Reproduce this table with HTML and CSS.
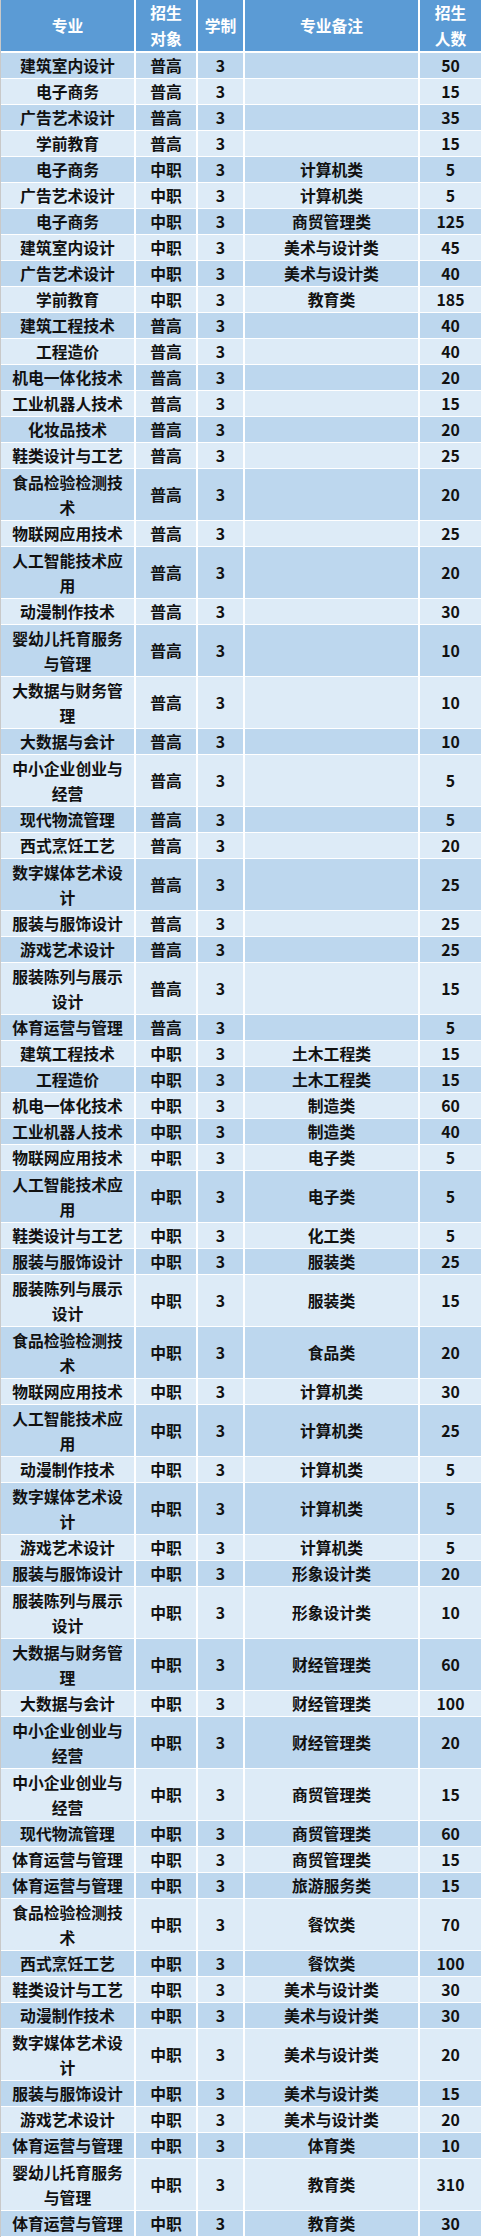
FILE: index.html
```html
<!DOCTYPE html>
<html lang="zh">
<head>
<meta charset="utf-8">
<title>招生计划</title>
<link rel="stylesheet" href="styles.css">
</head>
<body>
<table class="plan">
<colgroup>
<col class="c1"><col class="c2"><col class="c3"><col class="c4"><col class="c5">
</colgroup>
<thead>
<tr><th>专业</th><th>招生<br>对象</th><th>学制</th><th>专业备注</th><th>招生<br>人数</th></tr>
</thead>
<tbody>
<tr><td>建筑室内设计</td><td>普高</td><td>3</td><td></td><td>50</td></tr>
<tr><td>电子商务</td><td>普高</td><td>3</td><td></td><td>15</td></tr>
<tr><td>广告艺术设计</td><td>普高</td><td>3</td><td></td><td>35</td></tr>
<tr><td>学前教育</td><td>普高</td><td>3</td><td></td><td>15</td></tr>
<tr><td>电子商务</td><td>中职</td><td>3</td><td>计算机类</td><td>5</td></tr>
<tr><td>广告艺术设计</td><td>中职</td><td>3</td><td>计算机类</td><td>5</td></tr>
<tr><td>电子商务</td><td>中职</td><td>3</td><td>商贸管理类</td><td>125</td></tr>
<tr><td>建筑室内设计</td><td>中职</td><td>3</td><td>美术与设计类</td><td>45</td></tr>
<tr><td>广告艺术设计</td><td>中职</td><td>3</td><td>美术与设计类</td><td>40</td></tr>
<tr><td>学前教育</td><td>中职</td><td>3</td><td>教育类</td><td>185</td></tr>
<tr><td>建筑工程技术</td><td>普高</td><td>3</td><td></td><td>40</td></tr>
<tr><td>工程造价</td><td>普高</td><td>3</td><td></td><td>40</td></tr>
<tr><td>机电一体化技术</td><td>普高</td><td>3</td><td></td><td>20</td></tr>
<tr><td>工业机器人技术</td><td>普高</td><td>3</td><td></td><td>15</td></tr>
<tr><td>化妆品技术</td><td>普高</td><td>3</td><td></td><td>20</td></tr>
<tr><td>鞋类设计与工艺</td><td>普高</td><td>3</td><td></td><td>25</td></tr>
<tr class="dbl"><td>食品检验检测技术</td><td>普高</td><td>3</td><td></td><td>20</td></tr>
<tr><td>物联网应用技术</td><td>普高</td><td>3</td><td></td><td>25</td></tr>
<tr class="dbl"><td>人工智能技术应用</td><td>普高</td><td>3</td><td></td><td>20</td></tr>
<tr><td>动漫制作技术</td><td>普高</td><td>3</td><td></td><td>30</td></tr>
<tr class="dbl"><td>婴幼儿托育服务与管理</td><td>普高</td><td>3</td><td></td><td>10</td></tr>
<tr class="dbl"><td>大数据与财务管理</td><td>普高</td><td>3</td><td></td><td>10</td></tr>
<tr><td>大数据与会计</td><td>普高</td><td>3</td><td></td><td>10</td></tr>
<tr class="dbl"><td>中小企业创业与经营</td><td>普高</td><td>3</td><td></td><td>5</td></tr>
<tr><td>现代物流管理</td><td>普高</td><td>3</td><td></td><td>5</td></tr>
<tr><td>西式烹饪工艺</td><td>普高</td><td>3</td><td></td><td>20</td></tr>
<tr class="dbl"><td>数字媒体艺术设计</td><td>普高</td><td>3</td><td></td><td>25</td></tr>
<tr><td>服装与服饰设计</td><td>普高</td><td>3</td><td></td><td>25</td></tr>
<tr><td>游戏艺术设计</td><td>普高</td><td>3</td><td></td><td>25</td></tr>
<tr class="dbl"><td>服装陈列与展示设计</td><td>普高</td><td>3</td><td></td><td>15</td></tr>
<tr><td>体育运营与管理</td><td>普高</td><td>3</td><td></td><td>5</td></tr>
<tr><td>建筑工程技术</td><td>中职</td><td>3</td><td>土木工程类</td><td>15</td></tr>
<tr><td>工程造价</td><td>中职</td><td>3</td><td>土木工程类</td><td>15</td></tr>
<tr><td>机电一体化技术</td><td>中职</td><td>3</td><td>制造类</td><td>60</td></tr>
<tr><td>工业机器人技术</td><td>中职</td><td>3</td><td>制造类</td><td>40</td></tr>
<tr><td>物联网应用技术</td><td>中职</td><td>3</td><td>电子类</td><td>5</td></tr>
<tr class="dbl"><td>人工智能技术应用</td><td>中职</td><td>3</td><td>电子类</td><td>5</td></tr>
<tr><td>鞋类设计与工艺</td><td>中职</td><td>3</td><td>化工类</td><td>5</td></tr>
<tr><td>服装与服饰设计</td><td>中职</td><td>3</td><td>服装类</td><td>25</td></tr>
<tr class="dbl"><td>服装陈列与展示设计</td><td>中职</td><td>3</td><td>服装类</td><td>15</td></tr>
<tr class="dbl"><td>食品检验检测技术</td><td>中职</td><td>3</td><td>食品类</td><td>20</td></tr>
<tr><td>物联网应用技术</td><td>中职</td><td>3</td><td>计算机类</td><td>30</td></tr>
<tr class="dbl"><td>人工智能技术应用</td><td>中职</td><td>3</td><td>计算机类</td><td>25</td></tr>
<tr><td>动漫制作技术</td><td>中职</td><td>3</td><td>计算机类</td><td>5</td></tr>
<tr class="dbl"><td>数字媒体艺术设计</td><td>中职</td><td>3</td><td>计算机类</td><td>5</td></tr>
<tr><td>游戏艺术设计</td><td>中职</td><td>3</td><td>计算机类</td><td>5</td></tr>
<tr><td>服装与服饰设计</td><td>中职</td><td>3</td><td>形象设计类</td><td>20</td></tr>
<tr class="dbl"><td>服装陈列与展示设计</td><td>中职</td><td>3</td><td>形象设计类</td><td>10</td></tr>
<tr class="dbl"><td>大数据与财务管理</td><td>中职</td><td>3</td><td>财经管理类</td><td>60</td></tr>
<tr><td>大数据与会计</td><td>中职</td><td>3</td><td>财经管理类</td><td>100</td></tr>
<tr class="dbl"><td>中小企业创业与经营</td><td>中职</td><td>3</td><td>财经管理类</td><td>20</td></tr>
<tr class="dbl"><td>中小企业创业与经营</td><td>中职</td><td>3</td><td>商贸管理类</td><td>15</td></tr>
<tr><td>现代物流管理</td><td>中职</td><td>3</td><td>商贸管理类</td><td>60</td></tr>
<tr><td>体育运营与管理</td><td>中职</td><td>3</td><td>商贸管理类</td><td>15</td></tr>
<tr><td>体育运营与管理</td><td>中职</td><td>3</td><td>旅游服务类</td><td>15</td></tr>
<tr class="dbl"><td>食品检验检测技术</td><td>中职</td><td>3</td><td>餐饮类</td><td>70</td></tr>
<tr><td>西式烹饪工艺</td><td>中职</td><td>3</td><td>餐饮类</td><td>100</td></tr>
<tr><td>鞋类设计与工艺</td><td>中职</td><td>3</td><td>美术与设计类</td><td>30</td></tr>
<tr><td>动漫制作技术</td><td>中职</td><td>3</td><td>美术与设计类</td><td>30</td></tr>
<tr class="dbl"><td>数字媒体艺术设计</td><td>中职</td><td>3</td><td>美术与设计类</td><td>20</td></tr>
<tr><td>服装与服饰设计</td><td>中职</td><td>3</td><td>美术与设计类</td><td>15</td></tr>
<tr><td>游戏艺术设计</td><td>中职</td><td>3</td><td>美术与设计类</td><td>20</td></tr>
<tr><td>体育运营与管理</td><td>中职</td><td>3</td><td>体育类</td><td>10</td></tr>
<tr class="dbl"><td>婴幼儿托育服务与管理</td><td>中职</td><td>3</td><td>教育类</td><td>310</td></tr>
<tr><td>体育运营与管理</td><td>中职</td><td>3</td><td>教育类</td><td>30</td></tr>
</tbody>
</table>
</body>
</html>
```

FILE: styles.css
```css
html, body {
  margin: 0;
  padding: 0;
  background: #ffffff;
}

.plan {
  width: 481px;
  table-layout: fixed;
  border-collapse: separate;
  border-spacing: 0;
  border-left: 1px solid #c9c9c9;
  font-family: "Noto Sans CJK SC", "Noto Sans", sans-serif;
  font-size: 15.8px;
  font-weight: 700;
  color: #111111;
}

.c1 { width: 135px; }
.c2 { width: 62px; }
.c3 { width: 47px; }
.c4 { width: 175px; }
.c5 { width: 61px; }

.plan th,
.plan td {
  box-sizing: border-box;
  padding: 0 6px;
  text-align: center;
  vertical-align: middle;
  border-right: 2px solid #ffffff;
  border-bottom: 1px solid #ffffff;
  overflow: hidden;
}

.plan th:last-child,
.plan td:last-child {
  border-right: 0;
}

.plan th {
  height: 53px;
  line-height: 25.5px;
  background: #5b9bd5;
  color: #ffffff;
  border-bottom: 2px solid #ffffff;
}

.plan td {
  height: 26px;
  line-height: 25px;
}

.plan tr.dbl td {
  height: 52px;
}

.plan tbody tr:nth-child(odd) td {
  background: #bdd7ee;
}

.plan tbody tr:nth-child(even) td {
  background: #ddebf7;
}
```
